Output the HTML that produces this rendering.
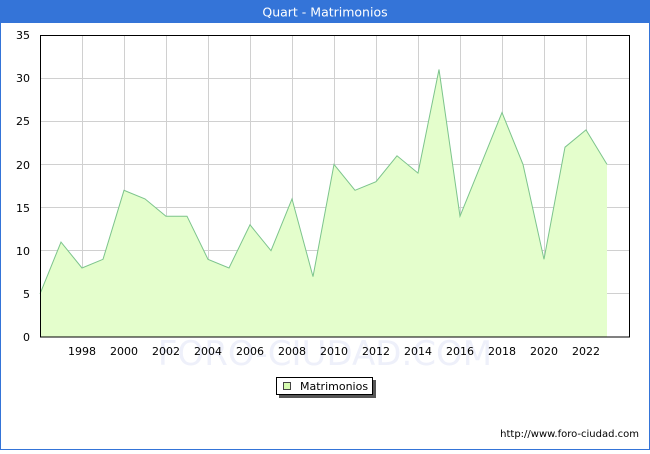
<!DOCTYPE html><html><head><style>body{margin:0;width:650px;height:450px;overflow:hidden;background:#fff;font-family:"DejaVu Sans","Liberation Sans",sans-serif}</style></head><body>
<svg width="650" height="450" xmlns="http://www.w3.org/2000/svg" font-family="DejaVu Sans, Liberation Sans, sans-serif">
<rect x="0.5" y="0.5" width="649" height="449" fill="#fff" stroke="#3474d8"/>
<rect x="0" y="0" width="650" height="23" fill="#3474d8"/>
<text x="325" y="16.5" fill="#fff" font-size="12.5" text-anchor="middle">Quart - Matrimonios</text>
<text x="325" y="365" fill="#eef0fa" font-size="34" text-anchor="middle">FORO-CIUDAD.COM</text>
<g stroke="#d0d0d0" stroke-width="1">
<path d="M40 293.5H630M40 250.5H630M40 207.5H630M40 164.5H630M40 121.5H630M40 78.5H630"/>
<path d="M82.5 35V337M124.5 35V337M166.5 35V337M208.5 35V337M250.5 35V337M292.5 35V337M334.5 35V337M376.5 35V337M418.5 35V337M460.5 35V337M502.5 35V337M544.5 35V337M586.5 35V337"/>
</g>
<path d="M40 337L40 293.9L61 242.1L82 268L103 259.3L124 190.3L145 198.9L166 216.2L187 216.2L208 259.3L229 268L250 224.8L271 250.7L292 198.9L313 276.6L334 164.4L355 190.3L376 181.7L397 155.8L418 173.1L439 69.5L460 216.2L481 164.4L502 112.6L523 164.4L544 259.3L565 147.2L586 129.9L607 164.4L607 337Z" fill="#e4fecc"/>
<path d="M40 293.9L61 242.1L82 268L103 259.3L124 190.3L145 198.9L166 216.2L187 216.2L208 259.3L229 268L250 224.8L271 250.7L292 198.9L313 276.6L334 164.4L355 190.3L376 181.7L397 155.8L418 173.1L439 69.5L460 216.2L481 164.4L502 112.6L523 164.4L544 259.3L565 147.2L586 129.9L607 164.4" fill="none" stroke="#7cc48c" stroke-width="1"/>
<rect x="40.5" y="35.5" width="589" height="301.5" fill="none" stroke="#000"/>
<g font-size="11" fill="#000" text-anchor="end">
<text x="30" y="341">0</text><text x="30" y="298">5</text><text x="30" y="255">10</text><text x="30" y="212">15</text><text x="30" y="169">20</text><text x="30" y="125">25</text><text x="30" y="82">30</text><text x="30" y="39">35</text>
</g>
<g font-size="11" fill="#000" text-anchor="middle">
<text x="82" y="355">1998</text><text x="124" y="355">2000</text><text x="166" y="355">2002</text><text x="208" y="355">2004</text><text x="250" y="355">2006</text><text x="292" y="355">2008</text><text x="334" y="355">2010</text><text x="376" y="355">2012</text><text x="418" y="355">2014</text><text x="460" y="355">2016</text><text x="502" y="355">2018</text><text x="544" y="355">2020</text><text x="586" y="355">2022</text>
</g>
<rect x="279" y="380" width="97" height="18" fill="#555"/>
<rect x="276.5" y="377.5" width="96" height="17" fill="#fff" stroke="#000"/>
<rect x="283.5" y="382.5" width="7" height="7" fill="#d6fcb0" stroke="#444"/>
<text x="300" y="390" font-size="11">Matrimonios</text>
<text x="639" y="437" font-size="10" text-anchor="end">http://www.foro-ciudad.com</text>
</svg></body></html>
